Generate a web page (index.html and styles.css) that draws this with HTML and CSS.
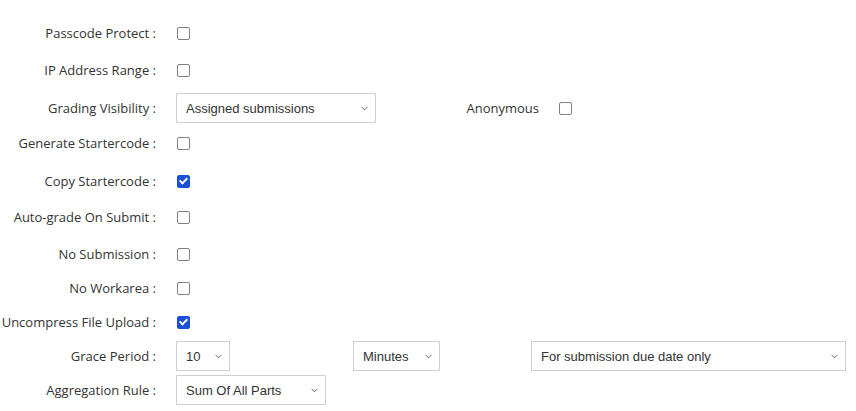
FILE: index.html
```html
<!DOCTYPE html>
<html>
<head>
<meta charset="utf-8">
<link rel="stylesheet" href="styles.css">
</head>
<body>
<form class="form">
  <div class="row r1"><label class="lbl">Passcode Protect :</label><input type="checkbox" class="cb"></div>
  <div class="row r2"><label class="lbl">IP Address Range :</label><input type="checkbox" class="cb"></div>
  <div class="row r3">
    <label class="lbl">Grading Visibility :</label>
    <span class="sel w-grading"><select><option>Assigned submissions</option></select><svg class="chev" viewBox="0 0 8 5"><path d="M0.5 0.5 L4 4 L7.5 0.5" /></svg></span>
    <label class="lbl lbl-anon">Anonymous</label><input type="checkbox" class="cb">
  </div>
  <div class="row r4"><label class="lbl">Generate Startercode :</label><input type="checkbox" class="cb"></div>
  <div class="row r5"><label class="lbl">Copy Startercode :</label><input type="checkbox" class="cb" checked></div>
  <div class="row r6"><label class="lbl">Auto-grade On Submit :</label><input type="checkbox" class="cb"></div>
  <div class="row r7"><label class="lbl">No Submission :</label><input type="checkbox" class="cb"></div>
  <div class="row r8"><label class="lbl">No Workarea :</label><input type="checkbox" class="cb"></div>
  <div class="row r9"><label class="lbl">Uncompress File Upload :</label><input type="checkbox" class="cb" checked></div>
  <div class="row r10">
    <label class="lbl">Grace Period :</label>
    <div class="grace">
      <span class="sel w-num"><select><option>10</option></select><svg class="chev" viewBox="0 0 8 5"><path d="M0.5 0.5 L4 4 L7.5 0.5" /></svg></span>
      <span class="sel w-unit"><select><option>Minutes</option></select><svg class="chev" viewBox="0 0 8 5"><path d="M0.5 0.5 L4 4 L7.5 0.5" /></svg></span>
      <span class="sel w-full"><select><option>For submission due date only</option></select><svg class="chev" viewBox="0 0 8 5"><path d="M0.5 0.5 L4 4 L7.5 0.5" /></svg></span>
    </div>
  </div>
  <div class="row r11">
    <label class="lbl">Aggregation Rule :</label>
    <span class="sel w-agg"><select><option>Sum Of All Parts</option></select><svg class="chev" viewBox="0 0 8 5"><path d="M0.5 0.5 L4 4 L7.5 0.5" /></svg></span>
  </div>
</form>
</body>
</html>
```

FILE: styles.css
```css
html, body {
  margin: 0;
  padding: 0;
  background: #fff;
}
body {
  font-family: "Open Sans", "Liberation Sans", sans-serif;
  font-size: 13px;
  color: #333;
}
.form {
  display: flex;
  flex-direction: column;
  padding: 18px 10px 0 0;
}
.row {
  display: flex;
  align-items: center;
  height: 30px;
}
.r2 { margin-top: 7px; }
.r3 { margin-top: 8px; }
.r4 { margin-top: 5px; }
.r5 { margin-top: 8px; }
.r6 { margin-top: 6px; }
.r7 { margin-top: 7px; }
.r8, .r9, .r10, .r11 { margin-top: 4px; }

.lbl {
  width: 156px;
  flex: none;
  text-align: right;
  white-space: nowrap;
  margin-right: 20px;
}
.lbl-anon {
  margin-left: 7px;
  margin-right: 19px;
}
.cb {
  appearance: none;
  -webkit-appearance: none;
  margin: 0 0 0 1px;
  width: 13px;
  height: 13px;
  border: 1.5px solid #80808a;
  border-radius: 2px;
  background: #fff;
  flex: none;
  position: relative;
}
.cb:checked {
  background: #1a4fd8;
  border-color: #1a4fd8;
}
.cb:checked::after {
  content: "";
  position: absolute;
  left: 3px;
  top: 0px;
  width: 3px;
  height: 6px;
  border: solid #fff;
  border-width: 0 2px 2px 0;
  transform: rotate(45deg);
}
.sel {
  position: relative;
  display: inline-block;
  height: 30px;
  flex: none;
}
.sel select {
  appearance: none;
  -webkit-appearance: none;
  width: 100%;
  height: 30px;
  box-sizing: border-box;
  border: 1px solid #cfcfcf;
  border-radius: 0;
  background: #fff;
  font-family: "Liberation Sans", Arial, sans-serif;
  font-size: 13px;
  color: #333;
  padding: 0 20px 0 9px;
  margin: 0;
}
.chev {
  position: absolute;
  right: 8px;
  top: 13px;
  width: 7px;
  height: 5px;
  fill: none;
  stroke: #555;
  stroke-width: 1;
  pointer-events: none;
}
.w-grading { width: 200px; }
.w-num { width: 54px; }
.w-unit { width: 87px; }
.w-full { width: 316px; }
.w-agg { width: 150px; }
.grace {
  display: grid;
  grid-template-columns: 177px 178px 1fr;
  flex: 1;
}
.grace .w-full { width: auto; }
```
